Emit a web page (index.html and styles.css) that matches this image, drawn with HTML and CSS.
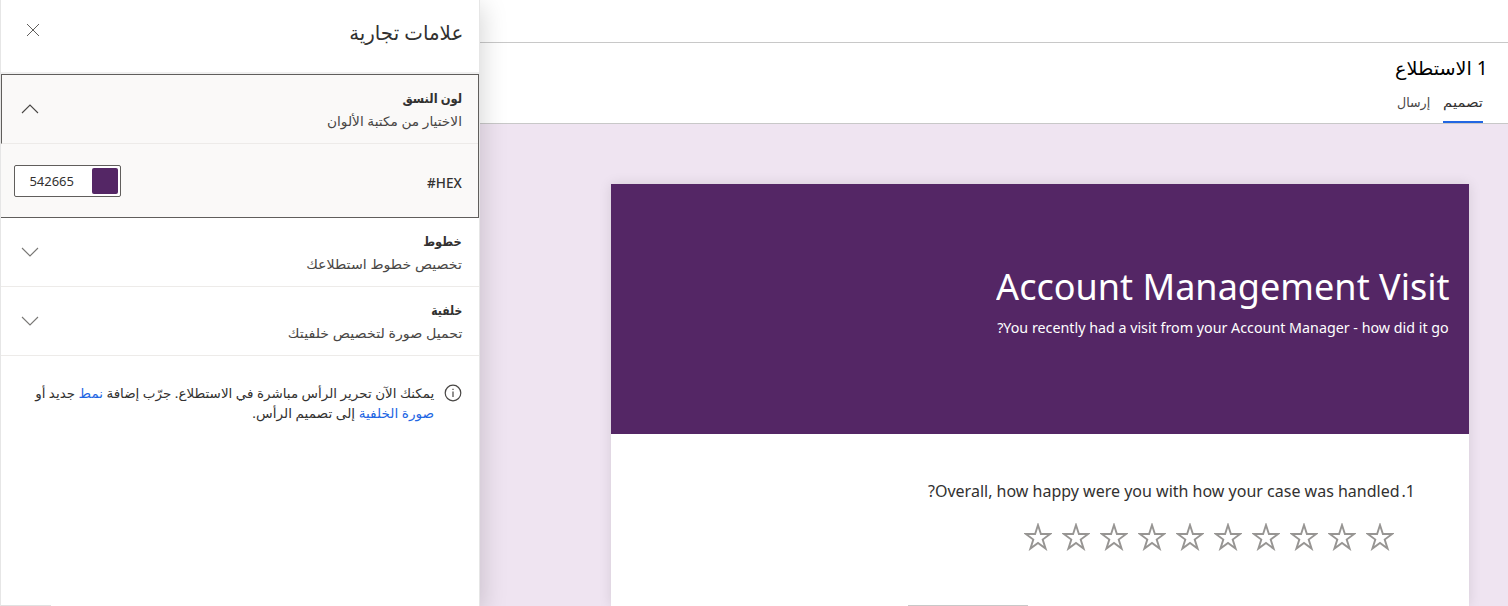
FILE: index.html
```
<!DOCTYPE html>
<html lang="ar" dir="rtl">
<head>
<meta charset="utf-8">
<title>علامات تجارية</title>
<link rel="stylesheet" href="styles.css">
</head>
<body>
<div class="app">
  <main class="main">
    <div class="topbar"></div>
    <header class="survey-head">
      <h1 class="survey-title"><span class="fit t-title">1 الاستطلاع</span></h1>
      <nav class="tabs">
        <a class="tab tab-active"><span class="fit t-design">تصميم</span></a>
        <a class="tab"><span class="fit t-send">إرسال</span></a>
      </nav>
    </header>
    <section class="canvas">
      <article class="card">
        <div class="hero">
          <h2 class="hero-title"><span class="fit t-hero">Account Management Visit</span></h2>
          <p class="hero-sub"><span class="fit t-sub">You recently had a visit from your Account Manager - how did it go?</span></p>
        </div>
        <div class="question">
          <p class="question-text"><span class="fit t-num">1.</span><span class="fit t-q">Overall, how happy were you with how your case was handled?</span></p>
          <div class="stars">
            <svg class="star" viewBox="0 0 28 28"><use href="#star"/></svg><svg class="star" viewBox="0 0 28 28"><use href="#star"/></svg><svg class="star" viewBox="0 0 28 28"><use href="#star"/></svg><svg class="star" viewBox="0 0 28 28"><use href="#star"/></svg><svg class="star" viewBox="0 0 28 28"><use href="#star"/></svg><svg class="star" viewBox="0 0 28 28"><use href="#star"/></svg><svg class="star" viewBox="0 0 28 28"><use href="#star"/></svg><svg class="star" viewBox="0 0 28 28"><use href="#star"/></svg><svg class="star" viewBox="0 0 28 28"><use href="#star"/></svg><svg class="star" viewBox="0 0 28 28"><use href="#star"/></svg>
          </div>
        </div>
        <div class="card-edge"></div>
      </article>
    </section>
  </main>
  <aside class="panel">
    <header class="panel-head">
      <h2 class="panel-title"><span class="fit t-panel">علامات تجارية</span></h2>
      <svg class="close" viewBox="0 0 14 14"><path d="M1 1L13 13M13 1L1 13"/></svg>
    </header>
    <section class="group group-open">
      <div class="row">
        <div class="row-text">
          <h3 class="row-title"><span class="fit t-r1">لون النسق</span></h3>
          <p class="row-sub"><span class="fit t-s1">الاختيار من مكتبة الألوان</span></p>
        </div>
        <svg class="chevron dark" viewBox="0 0 18 10"><path d="M1 9L9 1L17 9"/></svg>
      </div>
      <div class="color-row">
        <span class="hex-label"><span class="fit t-hex">HEX#</span></span>
        <div class="hex-field"><span class="swatch"></span><span class="hex-value"><span class="fit t-val">542665</span></span></div>
      </div>
    </section>
    <section class="group">
      <div class="row">
        <div class="row-text">
          <h3 class="row-title"><span class="fit t-r2">خطوط</span></h3>
          <p class="row-sub"><span class="fit t-s2">تخصيص خطوط استطلاعك</span></p>
        </div>
        <svg class="chevron" viewBox="0 0 18 10"><path d="M1 1L9 9L17 1"/></svg>
      </div>
    </section>
    <section class="group">
      <div class="row">
        <div class="row-text">
          <h3 class="row-title"><span class="fit t-r3">خلفية</span></h3>
          <p class="row-sub"><span class="fit t-s3">تحميل صورة لتخصيص خلفيتك</span></p>
        </div>
        <svg class="chevron" viewBox="0 0 18 10"><path d="M1 1L9 9L17 1"/></svg>
      </div>
    </section>
    <div class="note">
      <svg class="info" viewBox="0 0 18 18"><circle cx="9" cy="9" r="7.8"/><path d="M9 7.5V13M9 4.8V6"/></svg>
      <p class="note-text">
        <span class="fit t-n1">يمكنك الآن تحرير الرأس مباشرة في الاستطلاع. جرّب إضافة <a class="link">نمط</a> جديد أو</span>
        <span class="fit t-n2"><a class="link">صورة الخلفية</a> إلى تصميم الرأس.</span>
      </p>
    </div>
    <div class="panel-edge"></div>
  </aside>
</div>
<svg class="defs"><defs><path id="star" d="M14 2L16.9 11H26.2L18.7 16.5L21.6 25.6L14 20L6.4 25.6L9.3 16.5L1.8 11H11.1Z"/></defs></svg>
</body>
</html>
```
FILE: styles.css
```
* { box-sizing: border-box; margin: 0; padding: 0; }
body { width: 1508px; height: 606px; overflow: hidden; background: #fff; color: #323130; font-family: "Noto Sans", "DejaVu Sans", sans-serif; }
.app { display: flex; height: 606px; }
.defs { position: absolute; width: 0; height: 0; }
.fit { display: inline-block; white-space: nowrap; transform-origin: right center; }
h1, h2, h3 { font-weight: 400; }

/* Horizontal text fitting */
.t-design { transform: scaleX(1.14); }
.t-send { transform: scaleX(.97); }
.t-title { transform: scaleX(1.01); }
.t-hero { transform: scaleX(.974); }
.t-sub { transform: scaleX(1.02); }
.t-q { transform: scaleX(1); }
.t-panel { transform: scaleX(.99); }
.t-hex { transform: scaleX(.97); }
.t-r1 { transform: scaleX(.89); }
.t-r2 { transform: scaleX(.88); }
.t-r3 { transform: scaleX(.83); }
.t-s1 { transform: scaleX(1.055); }
.t-s2 { transform: scaleX(1.09); }
.t-s3 { transform: scaleX(1.095); }
.t-n1 { transform: scaleX(1.036); }
.t-n2 { transform: scaleX(1.05); }

.main { flex: 1; display: flex; flex-direction: column; }
.topbar { height: 43px; border-bottom: 1px solid #c8c8c8; }
.survey-head { height: 81px; padding: 11px 20px 0; border-bottom: 1px solid #c8c8c8; display: flex; flex-direction: column; justify-content: space-between; }
.survey-title { height: 28px; line-height: 28px; font-size: 19px; color: #000; }
.tabs { display: flex; gap: 13px; padding-right: 5px; }
.tab { height: 34px; line-height: 26px; font-size: 13px; width: 34px; color: #484644; }
.tab-active { width: 40px; border-bottom: 2px solid #2266e3; color: #323130; }
.canvas { flex: 1; background: #efe4f1; padding: 60px 39px 0 0; overflow: hidden; }
.card { width: 858px; height: 422px; background: #fff; box-shadow: 0 0 12px rgba(0, 0, 0, .11); display: flex; flex-direction: column; }
.hero { height: 250px; background: #542665; color: #fff; padding: 76px 20px 0; }
.hero-title { height: 54px; line-height: 52px; font-size: 37px; }
.hero-sub { height: 28px; line-height: 28px; font-size: 14px; }
.question { flex: 1; padding: 43px 54px 0; }
.question-text { height: 28px; line-height: 28px; font-size: 16px; display: flex; gap: 2px; }
.stars { display: flex; gap: 10px; padding: 18px 21px 0; }
.star { width: 28px; height: 28px; fill: none; stroke: #979593; stroke-width: 1.9; }
.card-edge { width: 120px; height: 1px; margin-right: 441px; background: #c8c8c8; }

.panel { position: relative; width: 480px; display: flex; flex-direction: column; background: #fff; border: 1px solid #e6e6e6; border-width: 0 1px; box-shadow: 2px 6px 24px rgba(0, 0, 0, .17); }
.panel-head { height: 74px; padding: 16px 16px 0 25px; border-bottom: 2px solid #f0f0f0; display: flex; justify-content: space-between; }
.panel-title { height: 34px; line-height: 34px; font-size: 20px; font-weight: 500; }
.close { width: 14px; height: 14px; margin-top: 7px; fill: none; stroke: #605e5c; stroke-width: 1; }
.group { height: 69px; border-bottom: 1px solid #edebe9; }
.group-open { height: 144px; background: #faf9f8; border: 1px solid #605e5c; border-left: 0; }
.row { height: 68px; display: flex; justify-content: space-between; padding: 12px 17px 0 20px; }
.group-open .row { height: 69px; padding: 12px 16px 0 19px; border-bottom: 1px solid #edebe9; border-left: 1px solid #605e5c; }
.row-title { height: 23px; line-height: 23px; font-size: 13px; font-weight: 600; }
.row-sub { height: 23px; line-height: 23px; font-size: 13px; color: #484644; }
.chevron { width: 18px; height: 10px; margin-top: 17px; fill: none; stroke: #797775; stroke-width: 1.1; }
.dark { stroke: #484644; }
.color-row { display: flex; justify-content: space-between; padding: 21px 16px 0 13px; }
.hex-label { height: 36px; line-height: 36px; font-size: 14px; font-weight: 500; }
.hex-field { width: 107px; height: 32px; border: 1px solid #605e5c; border-radius: 2px; background: #fff; display: flex; align-items: center; gap: 18px; padding-right: 2px; }
.swatch { width: 26px; height: 26px; border-radius: 2px; background: #542665; }
.hex-value { font-size: 13px; }
.note { display: flex; gap: 10px; padding: 28px 17px 0; }
.info { width: 18px; height: 18px; flex: none; fill: none; stroke: #484644; stroke-width: 1.2; }
.note-text { display: flex; flex-direction: column; align-items: flex-start; font-size: 13px; line-height: 20px; margin-top: -1px; }
.link { color: #2266e3; }
.panel-edge { width: 50px; height: 1px; margin: auto auto 0 0; background: #e1e1e1; }
```
